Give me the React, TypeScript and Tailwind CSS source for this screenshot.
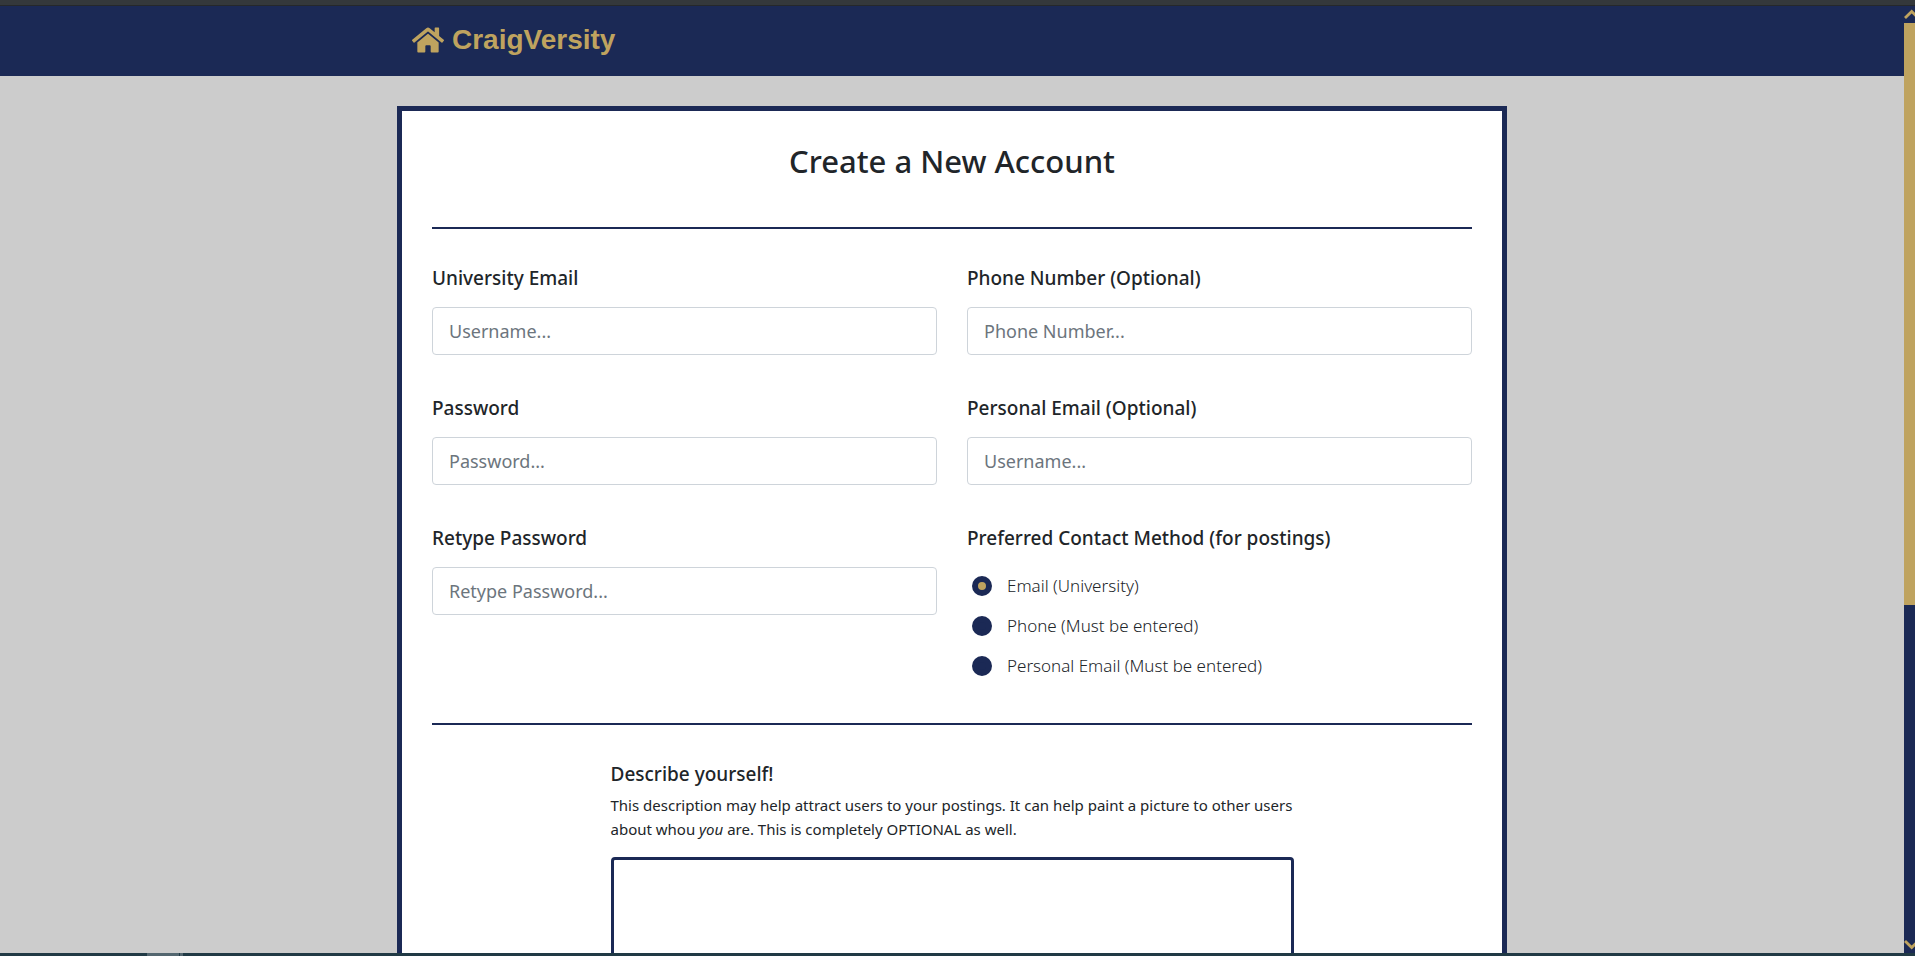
import type { ReactNode } from 'react';
import { FaHome } from 'react-icons/fa';

type FieldProps = {
  id: string;
  label: string;
  placeholder: string;
  type?: string;
};

function Field({ id, label, placeholder, type = 'text' }: FieldProps) {
  return (
    <div className="flex h-[130px] flex-col">
      <label htmlFor={id} className="mb-[17px] text-[19px] leading-6 font-medium">
        {label}
      </label>
      <input
        id={id}
        type={type}
        placeholder={placeholder}
        className="h-12 w-full rounded border border-[#ced4da] bg-white px-4 text-[18px] placeholder:text-[#6c757d] focus:outline-[#1b2955]"
      />
    </div>
  );
}

const contactMethods = [
  { id: 'contact-university', label: 'Email (University)' },
  { id: 'contact-phone', label: 'Phone (Must be entered)' },
  { id: 'contact-personal', label: 'Personal Email (Must be entered)' },
];

function ContactMethod() {
  return (
    <fieldset className="min-w-0">
      <legend className="mb-4 text-[19px] leading-6 font-medium">
        Preferred Contact Method (for postings)
      </legend>
      {contactMethods.map((method, index) => (
        <div key={method.id} className="flex h-10 items-center gap-[15px] pl-[5px]">
          <input
            id={method.id}
            type="radio"
            name="contact"
            defaultChecked={index === 0}
            className="size-5 appearance-none rounded-full border-[6px] border-[#1b2955] bg-[#1b2955] checked:bg-[#bfa35f]"
          />
          <label htmlFor={method.id} className="text-[17px] leading-6 font-light">
            {method.label}
          </label>
        </div>
      ))}
    </fieldset>
  );
}

function Chevron({ points }: { points: string }) {
  return (
    <svg width="17" height="17" viewBox="0 0 17 17" className="shrink-0" aria-hidden="true">
      <polyline points={points} fill="none" stroke="#bfa35f" strokeWidth="2.8" />
    </svg>
  );
}

function ScrollRail() {
  return (
    <div className="flex w-[11px] shrink-0 flex-col overflow-hidden bg-[#1b2955]" aria-hidden="true">
      <Chevron points="1,12 7.7,5.5 14.4,12" />
      <div className="flex flex-1 flex-col">
        <div className="grow-[582] bg-[#bfa35f]" />
        <div className="grow-[331]" />
      </div>
      <Chevron points="1,5 7.7,11.5 14.4,5" />
    </div>
  );
}

function Section({ children }: { children: ReactNode }) {
  return <section className="border-t-2 border-[#1b2955] pt-[37px]">{children}</section>;
}

export default function App() {
  return (
    <div className="flex h-screen flex-col font-['Noto_Sans','Open_Sans',sans-serif] text-[#212529]">
      <div className="h-1.5 shrink-0 border-b border-[#25282b] bg-[#34383b]" />
      <div className="flex min-h-0 flex-1">
        <div className="min-w-0 flex-1 overflow-hidden bg-[#cccccc]">
          <header className="bg-[#1b2955]">
            <div className="mx-auto flex h-[70px] max-w-[1110px] items-center px-[15px] pb-0.5">
              <a
                href="#home"
                className="flex items-center gap-2 font-['Liberation_Sans',Arial,sans-serif] text-[28px] font-bold text-[#bfa35f]"
              >
                <FaHome className="size-8" aria-hidden="true" />
                CraigVersity
              </a>
            </div>
          </header>
          <main className="mx-auto mt-[30px] max-w-[1110px] border-[5px] border-[#1b2955] bg-white px-[30px] pt-[30px]">
            <h1 className="mb-[46px] text-center text-[31px] leading-10 font-medium">
              Create a New Account
            </h1>
            <form>
              <Section>
                <div className="grid grid-cols-1 gap-x-[30px] md:grid-cols-2">
                  <div>
                    <Field id="university-email" label="University Email" placeholder="Username..." type="email" />
                    <Field id="password" label="Password" placeholder="Password..." type="password" />
                    <Field id="retype" label="Retype Password" placeholder="Retype Password..." type="password" />
                  </div>
                  <div className="pb-[37px]">
                    <Field id="phone" label="Phone Number (Optional)" placeholder="Phone Number..." type="tel" />
                    <Field id="personal-email" label="Personal Email (Optional)" placeholder="Username..." type="email" />
                    <ContactMethod />
                  </div>
                </div>
              </Section>
              <Section>
                <div className="mx-auto max-w-[683px]">
                  <label htmlFor="description" className="mb-[7px] block text-[19px] leading-6 font-medium">
                    Describe yourself!
                  </label>
                  <p className="mb-4 text-[15px] leading-6">
                    This description may help attract users to your postings. It can help paint a picture to
                    other users about whou <em>you</em> are. This is completely OPTIONAL as well.
                  </p>
                  <textarea
                    id="description"
                    rows={8}
                    className="block w-full resize-none rounded border-[3px] border-[#1b2955] bg-white p-3 focus:outline-none"
                  />
                </div>
              </Section>
            </form>
          </main>
        </div>
        <ScrollRail />
      </div>
      <div className="flex h-[3px] shrink-0 bg-[#213a45] pl-[147px]">
        <div className="w-8 bg-[#53666f]" />
        <div className="ml-px w-[3px] bg-[#53666f]" />
      </div>
    </div>
  );
}
